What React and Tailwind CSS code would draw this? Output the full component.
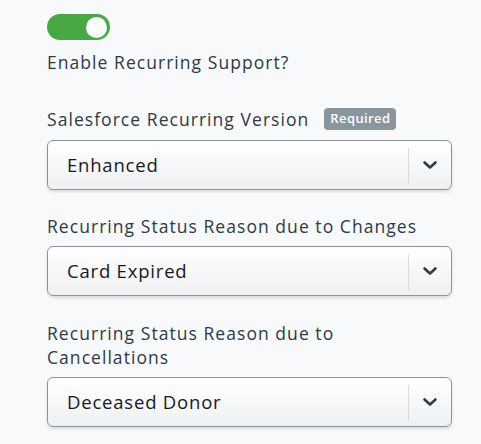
import { useState } from 'react'

// Bold chevron used on the select's right side
const Chevron = () => (
  <svg width="16" height="16" viewBox="0 0 16 16" fill="none">
    <path
      d="M2.5 5.5 L8 10.5 L13.5 5.5"
      stroke="#2f3b45"
      strokeWidth="2.6"
      strokeLinecap="round"
      strokeLinejoin="round"
    />
  </svg>
)

const SelectBox = ({ value }) => (
  <div className="h-[50px] flex items-center rounded-[6px] border-[1.5px] border-[#8c959d] bg-gradient-to-b from-white to-[#eef0f2] shadow-[0_2px_3px_rgba(0,0,0,0.12)]">
    <span className="flex-1 pl-[19px] text-[18.5px] tracking-[0.8px] text-[#151a1e]">{value}</span>
    <div className="w-px h-[36px] mt-[2px] bg-[#d6dbdf]" />
    <div className="w-[42px] flex items-center justify-center">
      <Chevron />
    </div>
  </div>
)

const Label = ({ children }) => (
  <div className="text-[17.5px] leading-[24px] tracking-[1.05px] text-[#2c3b47]">{children}</div>
)

export default function App() {
  const [on, setOn] = useState(true)

  return (
    <div
      className="w-[481px] h-[444px] bg-[#f8f9fa] pl-[47px] pr-[29px] pt-[14px] overflow-hidden"
      style={{ fontFamily: "'Open Sans', 'Liberation Sans', sans-serif" }}
    >
      {/* Toggle */}
      <button
        onClick={() => setOn(!on)}
        className={`w-[63px] h-[26px] rounded-full flex items-center px-[3px] ${on ? 'bg-[#48a944] justify-end' : 'bg-gray-300 justify-start'}`}
      >
        <span className="w-[21px] h-[21px] rounded-full bg-white" />
      </button>

      <div className="mt-[10px]">
        <Label>Enable Recurring Support?</Label>
      </div>

      <div className="mt-[33px] flex items-center gap-[15px]">
        <Label>Salesforce Recurring Version</Label>
        <span className="h-[22px] px-[6px] rounded-[4px] bg-[#8a969f] text-white text-[13px] tracking-[0.4px] font-semibold flex items-center">
          Required
        </span>
      </div>
      <div className="mt-[9px]">
        <SelectBox value="Enhanced" />
      </div>

      <div className="mt-[24px]">
        <Label>Recurring Status Reason due to Changes</Label>
      </div>
      <div className="mt-[8px]">
        <SelectBox value="Card Expired" />
      </div>

      <div className="mt-[25px]">
        <Label>Recurring Status Reason due to Cancellations</Label>
      </div>
      <div className="mt-[8px]">
        <SelectBox value="Deceased Donor" />
      </div>
    </div>
  )
}
